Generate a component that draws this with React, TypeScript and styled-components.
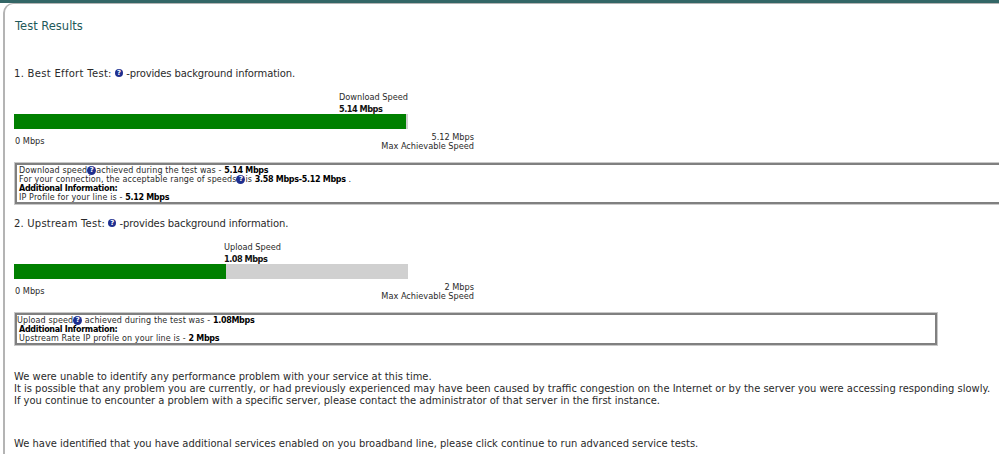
import React, { FunctionComponent } from 'react';
import styled, { createGlobalStyle } from 'styled-components';

const GlobalStyle = createGlobalStyle`
    html, body {
        margin: 0;
        padding: 0;
        background: #ffffff;
        overflow: hidden;
    }
    body {
        font-family: 'DejaVu Sans', Verdana, sans-serif;
        color: #2a2a2a;
    }
`;

const Page = styled.div`
    width: 999px;
    height: 454px;
    overflow: hidden;
    border-top: 3px solid #336666;
    box-sizing: border-box;
`;
const Panel = styled.div`
    height: 460px;
    margin-left: 3px;
    padding: 15px 0 0 9px;
    box-sizing: border-box;
    border-left: 2px solid #b4b4b4;
    border-top: 1px solid #b4b4b4;
    border-top-left-radius: 10px;
`;
const Title = styled.h1`
    margin: 0 0 0 1px;
    font-size: 11.5px;
    line-height: 14px;
    font-weight: 400;
    color: #1f5a5a;
`;
const SectionHeading = styled.p<{ $top: number }>`
    margin: ${(p) => p.$top}px 0 0;
    font-size: 10px;
    line-height: 14px;
    white-space: nowrap;
`;
const HeadingLead = styled.span<{ $spacing: number }>`
    letter-spacing: ${(p) => p.$spacing}px;
`;
const HeadingRest = styled.span`
    letter-spacing: -0.12px;
`;
const HeadingIcon = styled.span`
    display: inline-block;
    width: 8px;
    height: 8px;
    margin: 2px 0 0;
    border-radius: 50%;
    background: #1f2f8f;
    color: #ffffff;
    font-size: 7px;
    font-weight: 700;
    line-height: 8px;
    text-align: center;
    vertical-align: top;
`;
const HelpIcon = styled(HeadingIcon)`
    width: 9px;
    height: 9px;
    margin: 0;
    line-height: 9px;
    letter-spacing: 0;
`;
const Gauge = styled.div`
    width: 460px;
    margin-top: 11px;
`;
const Caption = styled.div<{ $left: number }>`
    margin-left: ${(p) => p.$left}px;
    font-size: 8.2px;
    line-height: 11px;
    white-space: nowrap;
    strong {
        display: block;
        font-weight: 700;
        line-height: 10px;
        letter-spacing: -0.5px;
        margin-top: 1px;
        color: #111111;
    }
`;
const Track = styled.div`
    width: 394px;
    height: 15px;
    background: #d0d0d0;
`;
const Fill = styled.div`
    height: 100%;
    background: #008000;
`;
const Scale = styled.div`
    display: flex;
    justify-content: space-between;
    align-items: center;
    margin-top: 4px;
    padding-left: 1px;
    font-size: 8.2px;
    line-height: 9px;
    span {
        padding-bottom: 2px;
    }
`;
const ScaleEnd = styled.div`
    text-align: right;
    white-space: nowrap;
`;
const InfoBox = styled.div<{ $width: number; $top: number; $pad: number }>`
    width: ${(p) => p.$width}px;
    margin-top: ${(p) => p.$top}px;
    margin-left: 1px;
    padding: 1px 0 0 ${(p) => p.$pad}px;
    box-sizing: border-box;
    border: 2px solid #808080;
    outline: 1px solid #c8c8c8;
    font-size: 8px;
    letter-spacing: 0.12px;
    white-space: nowrap;
    strong {
        font-weight: 700;
        letter-spacing: -0.3px;
        color: #000000;
    }
`;
const InfoLine = styled.div<{ $indent?: number }>`
    height: 9px;
    line-height: 9px;
    padding-left: ${(p) => p.$indent ?? 0}px;
`;
const Message = styled.div<{ $top: number }>`
    margin-top: ${(p) => p.$top}px;
    font-size: 9.95px;
    line-height: 12px;
    white-space: nowrap;
`;

interface IGaugeProps {
    name: string;
    speed: string;
    max: string;
    percent: number;
    captionLeft: number;
}

const SpeedGauge: FunctionComponent<IGaugeProps> = ({ name, speed, max, percent, captionLeft }) => (
    <Gauge>
        <Caption $left={captionLeft}>
            {name}
            <strong>{speed}</strong>
        </Caption>
        <Track>
            <Fill style={{ width: `${percent}%` }} />
        </Track>
        <Scale>
            <span>0 Mbps</span>
            <ScaleEnd>
                {max}
                <br />
                Max Achievable Speed
            </ScaleEnd>
        </Scale>
    </Gauge>
);

const App: FunctionComponent = () => (
    <Page>
        <GlobalStyle />
        <Panel>
            <Title>Test Results</Title>
            <SectionHeading $top={34}>
                <HeadingLead $spacing={0.3}>1. Best Effort Test:</HeadingLead> <HeadingIcon>?</HeadingIcon>{' '}
                <HeadingRest>-provides background information.</HeadingRest>
            </SectionHeading>
            <SpeedGauge name="Download Speed" speed="5.14 Mbps" max="5.12 Mbps" percent={99.5} captionLeft={325} />
            <InfoBox $width={1100} $top={12} $pad={2}>
                <InfoLine>
                    Download speed<HelpIcon>?</HelpIcon>achieved during the test was - <strong>5.14 Mbps</strong>
                </InfoLine>
                <InfoLine>
                    For your connection, the acceptable range of speeds<HelpIcon>?</HelpIcon>is <strong>3.58 Mbps-5.12 Mbps</strong> .
                </InfoLine>
                <InfoLine>
                    <strong>Additional Information:</strong>
                </InfoLine>
                <InfoLine>
                    IP Profile for your line is - <strong>5.12 Mbps</strong>
                </InfoLine>
            </InfoBox>
            <SectionHeading $top={13}>
                <HeadingLead $spacing={0.2}>2. Upstream Test:</HeadingLead> <HeadingIcon>?</HeadingIcon>{' '}
                <HeadingRest>-provides background information.</HeadingRest>
            </SectionHeading>
            <SpeedGauge name="Upload Speed" speed="1.08 Mbps" max="2 Mbps" percent={53.8} captionLeft={210} />
            <InfoBox $width={922} $top={12} $pad={0}>
                <InfoLine>
                    Upload speed<HelpIcon>?</HelpIcon> achieved during the test was - <strong>1.08Mbps</strong>
                </InfoLine>
                <InfoLine $indent={2}>
                    <strong>Additional Information:</strong>
                </InfoLine>
                <InfoLine $indent={2}>
                    Upstream Rate IP profile on your line is - <strong>2 Mbps</strong>
                </InfoLine>
            </InfoBox>
            <Message $top={26}>
                We were unable to identify any performance problem with your service at this time.
                <br />
                It is possible that any problem you are currently, or had previously experienced may have been caused by traffic congestion on the Internet or by the server you were accessing responding slowly.
                <br />
                If you continue to encounter a problem with a specific server, please contact the administrator of that server in the first instance.
            </Message>
            <Message $top={31}>
                We have identified that you have additional services enabled on you broadband line, please click continue to run advanced service tests.
            </Message>
        </Panel>
    </Page>
);

export default App;
